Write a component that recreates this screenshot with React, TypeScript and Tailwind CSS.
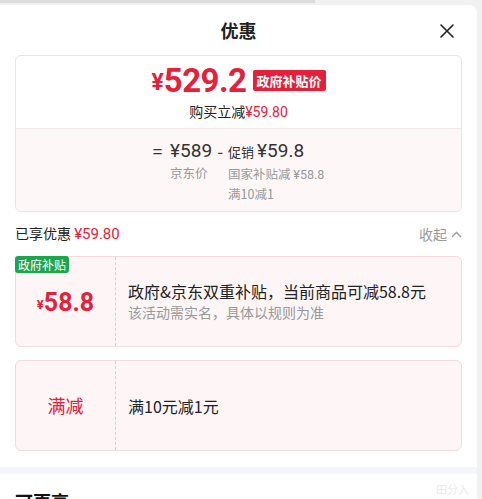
import React from "react";

const FONT = { fontFamily: '"Noto Sans CJK SC", "Noto Sans", sans-serif' };
const NUM = { fontFamily: 'Roboto, "Noto Sans CJK SC", sans-serif' };

function CloseIcon() {
  return (
    <svg width="16" height="16" viewBox="0 0 16 16" className="text-[#222]">
      <path d="M2 2 L14 14 M14 2 L2 14" stroke="currentColor" strokeWidth="1.6" strokeLinecap="round" />
    </svg>
  );
}

function ChevronUp() {
  return (
    <svg width="11" height="7" viewBox="0 0 11 7" className="text-[#999]">
      <path d="M1 6 L5.5 1.5 L10 6" fill="none" stroke="currentColor" strokeWidth="1.3" />
    </svg>
  );
}

function PriceCard() {
  return (
    <div className="overflow-hidden rounded-[6px] border border-[#f3dfe1] bg-white">
      <div className="flex h-[72px] flex-col items-center justify-center">
        <div className="flex items-center text-[#e5203a]">
          <span className="mt-[4px] text-[23px] font-bold leading-none" style={NUM}>
            ¥
          </span>
          <span className="text-[33px] font-bold leading-none tracking-[-0.5px]" style={NUM}>
            529.2
          </span>
          <span className="ml-[6px] rounded-[2px] bg-[#e5203a] px-[4px] py-[1px] text-[13px] font-bold leading-[19px] text-white">
            政府补贴价
          </span>
        </div>
        <div className="mt-[6px] text-[14px] leading-[16px] text-[#222]">
          购买立减<span className="text-[#e5203a]" style={NUM}>¥59.80</span>
        </div>
      </div>
      <div className="flex h-[83px] justify-center border-t border-[#f6e6e8] bg-[#fdf7f7] pt-[11px]">
        <div className="flex items-start text-[#333]">
          <span className="mr-[8px] text-[17px] leading-[22px]">=</span>
          <div className="flex flex-col">
            <span className="text-[19px] leading-[22px]" style={NUM}>¥589</span>
            <span className="mt-[3px] text-[12.5px] leading-[16px] text-[#999]">京东价</span>
          </div>
          <span className="mx-[5px] text-[17px] leading-[22px]">-</span>
          <div className="flex flex-col">
            <span className="flex items-baseline text-[19px] leading-[22px]">
              <span className="mr-[3px] text-[13px]">促销</span>
              <span style={NUM}>¥59.8</span>
            </span>
            <span className="mt-[3px] text-[12.5px] leading-[16px] text-[#999]">
              国家补贴减 <span style={NUM}>¥58.8</span>
            </span>
            <span className="mt-[3px] text-[12.5px] leading-[16px] text-[#999]">满10减1</span>
          </div>
        </div>
      </div>
    </div>
  );
}

function SubsidyCard() {
  return (
    <div className="relative flex h-[91px] rounded-[6px] border border-[#f3dadd] bg-[#fdf5f6]">
      <span className="absolute left-[-1px] top-[-1px] rounded-[3px] bg-[#1ca64c] px-[3px] text-[12px] leading-[17px] text-white">
        政府补贴
      </span>
      <div className="flex w-[100px] items-center justify-center border-r border-dashed border-[#ebc9cd] pt-[2px] text-[#e5203a]">
        <span className="mt-[4px] text-[13px] font-bold" style={NUM}>¥</span>
        <span className="text-[25px] font-bold leading-none" style={NUM}>58.8</span>
      </div>
      <div className="flex flex-col justify-center pl-[12px] pb-[2px]">
        <span className="text-[16px] leading-[22px] text-[#222]">政府&amp;京东双重补贴，当前商品可减58.8元</span>
        <span className="text-[14px] leading-[20px] text-[#999]">该活动需实名，具体以规则为准</span>
      </div>
    </div>
  );
}

function FullCutCard() {
  return (
    <div className="flex h-[91px] rounded-[6px] border border-[#f3dadd] bg-[#fdf5f6]">
      <div className="flex w-[100px] items-center justify-center border-r border-dashed border-[#ebc9cd] text-[18px] text-[#e5203a]">
        满减
      </div>
      <div className="flex items-center pl-[12px] text-[16px] text-[#222]">满10元减1元</div>
    </div>
  );
}

export default function App() {
  return (
    <div className="h-[499px] w-[482px] overflow-hidden bg-[#f1f1f1]" style={FONT}>
      <div className="h-[5px]">
        <div className="h-[3px] w-[315px] bg-[#dcdcdc]" />
      </div>
      <div className="relative h-[494px] w-[477px] overflow-hidden rounded-tr-[8px] bg-white">
        <div className="relative flex h-[50px] items-center justify-center">
          <span className="text-[18px] font-bold text-[#222]">优惠</span>
          <span className="absolute right-[22px] top-[18px]">
            <CloseIcon />
          </span>
        </div>
        <div className="w-[462px] pl-[15px]">
          <PriceCard />
          <div className="flex h-[44px] items-center justify-between">
            <span className="text-[14px] text-[#222]">
              已享优惠 <span className="text-[15px] text-[#e5203a]" style={NUM}>¥59.80</span>
            </span>
            <span className="flex items-center gap-[4px] text-[14px] text-[#999]">
              收起
              <ChevronUp />
            </span>
          </div>
          <div className="flex flex-col gap-[13px]">
            <SubsidyCard />
            <FullCutCard />
          </div>
        </div>
        <div className="mt-[16px] h-[7px] bg-[#f4f5fa]" />
        <div className="px-[15px] pt-[15px] text-[18px] font-bold leading-[24px] text-[#111]">可更高</div>
        <span className="absolute bottom-[2px] right-[8px] text-[11px] text-[#eaeaea]">田分入</span>
      </div>
    </div>
  );
}
